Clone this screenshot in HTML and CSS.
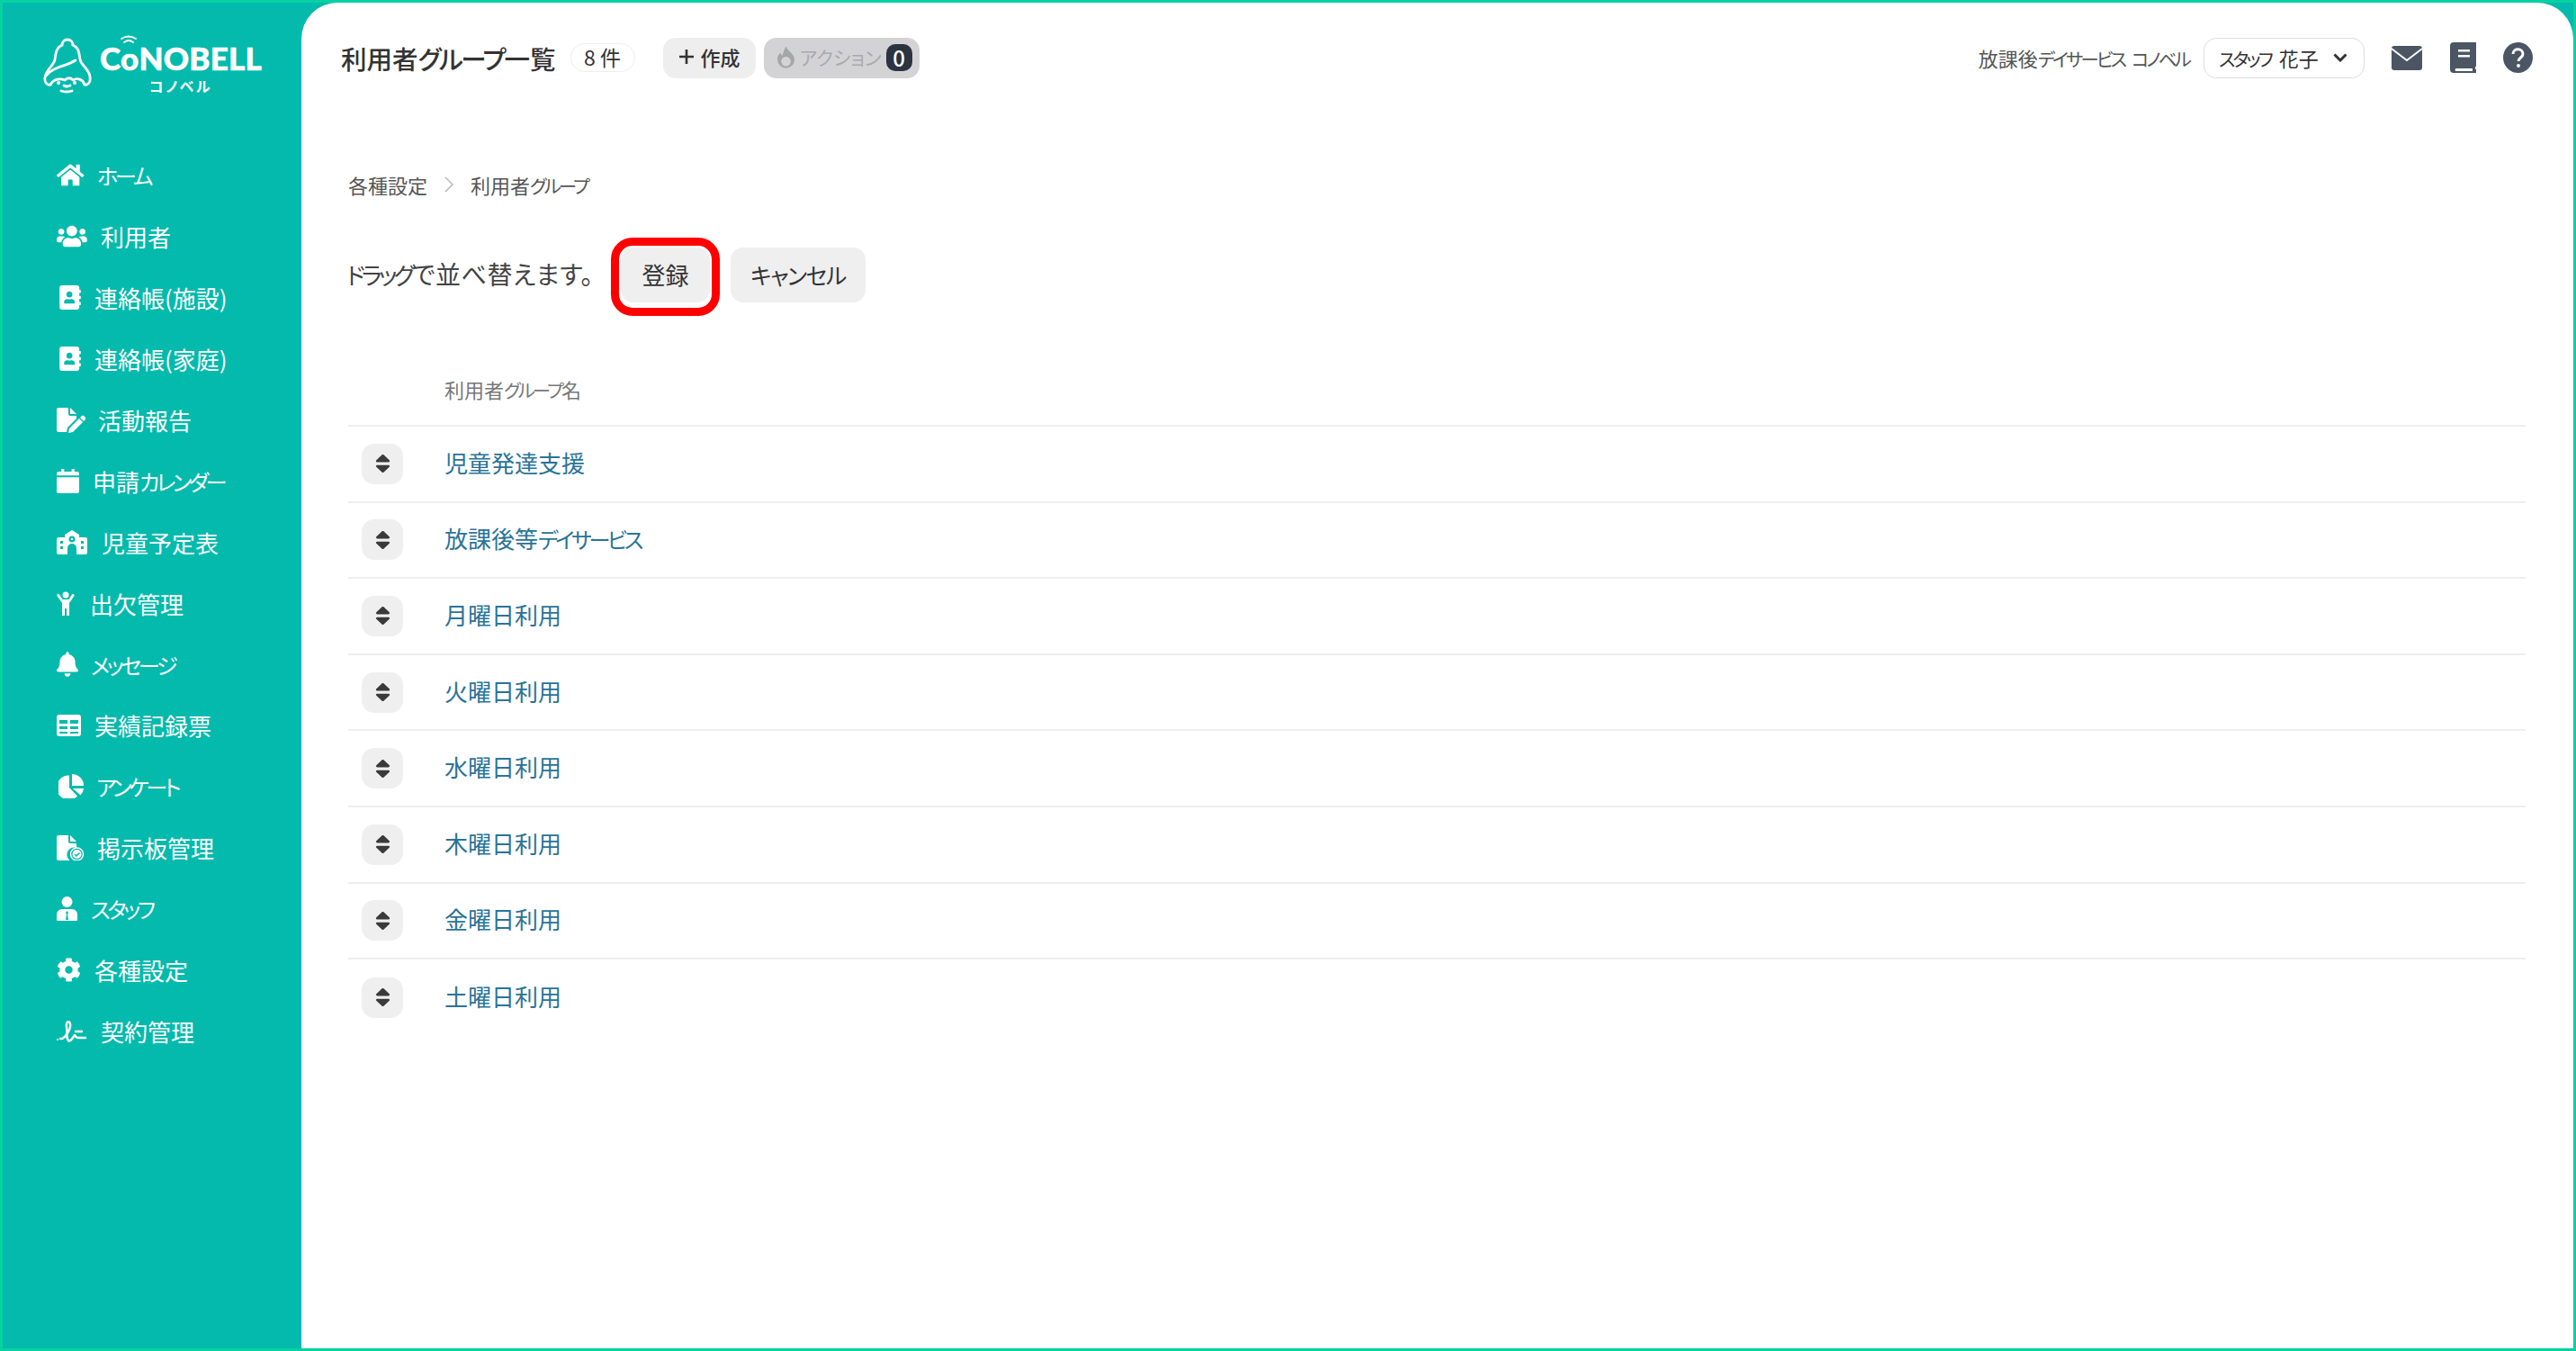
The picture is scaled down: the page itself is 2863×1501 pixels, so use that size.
FILE: index.html
```html
<!DOCTYPE html>
<html lang="ja">
<head>
<meta charset="utf-8">
<title>利用者グループ一覧</title>
<link rel="stylesheet" href="styles.css">
</head>
<body>
<svg class="defs" width="0" height="0" aria-hidden="true">
  <symbol id="sort" viewBox="0 0 320 512" preserveAspectRatio="none"><path d="M41 288h238c21.4 0 32.1 25.9 17 41L177 448c-9.4 9.4-24.6 9.4-33.9 0L24 329c-15.1-15.1-4.4-41 17-41zm255-105L177 64c-9.4-9.4-24.6-9.4-33.9 0L24 183c-15.1 15.1-4.4 41 17 41h238c21.4 0 32.1-25.9 17-41z"/></symbol>
  <symbol id="addr" viewBox="0 0 448 512"><path d="M436 160c6.6 0 12-5.4 12-12v-40c0-6.600-5.400-12-12-12h-20V48c0-26.500-21.500-48-48-48H48C21.500 0 0 21.500 0 48v416c0 26.500 21.500 48 48 48h320c26.500 0 48-21.500 48-48v-48h20c6.600 0 12-5.400 12-12v-40c0-6.600-5.400-12-12-12h-20v-64h20c6.600 0 12-5.400 12-12v-40c0-6.600-5.400-12-12-12h-20v-64h20zm-228-32c35.300 0 64 28.700 64 64s-28.700 64-64 64-64-28.700-64-64 28.700-64 64-64zm112 236.800c0 10.600-10 19.200-22.400 19.200H118.400C106 384 96 375.400 96 364.800v-19.200c0-31.800 30.100-57.600 67.200-57.600h5c12.300 5.100 25.700 8 39.800 8s27.600-2.900 39.800-8h5c37.100 0 67.200 25.800 67.200 57.600v19.200z"/></symbol>
</svg>
<div class="frame">
  <aside class="sidebar">
    <div class="brand">
      <svg class="bell" width="54" height="62" viewBox="0 0 54 62" fill="none" stroke="#fff" stroke-width="2.800" stroke-linecap="round" stroke-linejoin="round">
        <path d="M21 8C14 11 14 18 13 24C12 31 3 35 2 44C1 50 5 53 8 52"/>
        <path d="M33 8C40 11 40 18 41 24C42 31 52 35 52 44C53 50 49 53 46 52"/>
        <path d="M21 8C21 0 33 0 33 8"/>
        <path d="M3 42C13 31 25 32 36 25"/>
        <path d="M8 52C12 45 20 45 24 47C27 44 31 44 33 47C38 44 44 46 46 52"/>
        <path d="M20 59Q26 61 32 59"/>
        <path d="M23 53Q26 55 30 53"/>
        <circle cx="17" cy="50" r="2" fill="#fff" stroke="none"/>
        <circle cx="35" cy="50" r="2" fill="#fff" stroke="none"/>
      </svg>
      <div class="wordmark">
        <div class="word">C<span class="word-o">o<svg class="wifi" width="20" height="9" viewBox="0 0 20 9" fill="none" stroke="#fff" stroke-width="1.800" stroke-linecap="round"><path d="M2 4Q10 -1 18 4"/><path d="M5 8Q10 4 15 8"/></svg></span>NOBELL</div>
        <div class="kana">コノベル</div>
      </div>
    </div>
    <nav class="nav">
      <a class="nav-item"><svg width="31" height="27" viewBox="0 0 576 512" preserveAspectRatio="xMinYMid"><path d="M280.37 148.26L96 300.11V464a16 16 0 0 0 16 16l112.06-.29a16 16 0 0 0 15.92-16V368a16 16 0 0 1 16-16h64a16 16 0 0 1 16 16v95.64a16 16 0 0 0 16 16.05L464 480a16 16 0 0 0 16-16V300L295.67 148.26a12.19 12.19 0 0 0-15.3 0zM571.6 251.47L488 182.56V44.05a12 12 0 0 0-12-12h-56a12 12 0 0 0-12 12v72.61L318.47 43a48 48 0 0 0-61 0L4.34 251.47a12 12 0 0 0-1.6 16.9l25.5 31A12 12 0 0 0 45.15 301l235.22-193.74a12.19 12.19 0 0 1 15.3 0L530.9 301a12 12 0 0 0 16.9-1.6l25.5-31a12 12 0 0 0-1.7-16.93z"/></svg><span class="kn">ホーム</span></a>
      <a class="nav-item"><svg width="35" height="27" viewBox="0 0 640 512" preserveAspectRatio="xMinYMid"><path d="M96 224c35.300 0 64-28.700 64-64s-28.700-64-64-64-64 28.700-64 64 28.700 64 64 64zm448 0c35.300 0 64-28.700 64-64s-28.700-64-64-64-64 28.700-64 64 28.700 64 64 64zm32 32h-64c-17.600 0-33.500 7.100-45.100 18.600 40.300 22.100 68.900 62 75.100 109.400h66c17.700 0 32-14.300 32-32v-32c0-35.300-28.700-64-64-64zm-256 0c61.900 0 112-50.100 112-112S381.900 32 320 32 208 82.100 208 144s50.100 112 112 112zm76.800 32h-8.300c-20.800 10-43.900 16-68.500 16s-47.600-6-68.500-16h-8.300C179.600 288 128 339.600 128 403.200V432c0 26.500 21.500 48 48 48h288c26.500 0 48-21.500 48-48v-28.800c0-63.600-51.600-115.200-115.200-115.200zm-223.700-13.400C161.500 263.100 145.600 256 128 256H64c-35.300 0-64 28.700-64 64v32c0 17.700 14.300 32 32 32h65.900c6.300-47.400 34.900-87.300 75.200-109.400z"/></svg>利用者</a>
      <a class="nav-item"><svg class="addr-ic" width="26" height="27" preserveAspectRatio="xMinYMid"><use href="#addr"/></svg>連絡帳(施設)</a>
      <a class="nav-item"><svg class="addr-ic" width="26" height="27" preserveAspectRatio="xMinYMid"><use href="#addr"/></svg>連絡帳(家庭)</a>
      <a class="nav-item"><svg width="32" height="28" viewBox="0 0 32 28" preserveAspectRatio="xMinYMid"><path d="M2 0h11v7a2 2 0 0 0 2 2h7v3L12 22l-1 5H2a2 2 0 0 1-2-2V2a2 2 0 0 1 2-2z"/><path d="M15 0l7 7h-7z"/><path d="M14 23l11-11 4 4-11 11-5 1z"/><path d="M26 11l2-2a1.500 1.500 0 0 1 2 0l2 2a1.500 1.500 0 0 1 0 2l-2 2z"/></svg>活動報告</a>
      <a class="nav-item"><svg width="26" height="27" viewBox="0 0 24 26" preserveAspectRatio="xMinYMid"><path d="M5 0h3v4H5zM16 0h3v4h-3z"/><path d="M2 3h20a2 2 0 0 1 2 2v2H0V5a2 2 0 0 1 2-2z"/><path d="M0 9h24v15a2 2 0 0 1-2 2H2a2 2 0 0 1-2-2z"/></svg>申請<span class="kn">カレンダー</span></a>
      <a class="nav-item"><svg width="36" height="27" viewBox="0 0 34 27" preserveAspectRatio="xMinYMid"><path fill-rule="evenodd" d="M17 0L25 5V8H32a2 2 0 0 1 2 2V25a2 2 0 0 1-2 2H22V20a5 5 0 0 0-10 0V27H2a2 2 0 0 1-2-2V10a2 2 0 0 1 2-2H9V5ZM17 6.500a3.500 3.500 0 1 0 0 7 3.500 3.500 0 0 0 0-7ZM4 12v3h3v-3ZM4 18v3h3v-3ZM27 12v3h3v-3ZM27 18v3h3v-3Z"/><circle cx="17" cy="10" r="1.300"/></svg>児童予定表</a>
      <a class="nav-item"><svg width="23" height="27" viewBox="0 0 20 27" preserveAspectRatio="xMinYMid"><circle cx="10" cy="4" r="3.500"/><path d="M1 3a1.500 1.500 0 0 1 2 .5L6.500 9h7L17 3.500a1.500 1.500 0 0 1 2.500 1.500L14 13v13a1.500 1.500 0 0 1-3 0v-7H9v7a1.500 1.500 0 0 1-3 0V13L.5 5A1.500 1.500 0 0 1 1 3z"/></svg>出欠管理</a>
      <a class="nav-item"><svg width="24" height="28" viewBox="0 0 448 512" preserveAspectRatio="xMinYMid"><path d="M224 512c35.320 0 63.970-28.650 63.970-64H160.030c0 35.350 28.650 64 63.970 64zm215.390-149.710c-19.320-20.760-55.470-51.990-55.470-154.290 0-77.700-54.480-139.900-127.940-155.160V32c0-17.670-14.320-32-31.980-32s-31.980 14.330-31.980 32v20.840C118.560 68.100 64.080 130.300 64.080 208c0 102.300-36.150 133.530-55.470 154.290-6 6.450-8.660 14.160-8.610 21.710.11 16.400 12.980 32 32.100 32h383.800c19.120 0 32-15.600 32.100-32 .05-7.550-2.610-15.270-8.610-21.710z"/></svg><span class="kn">メッセージ</span></a>
      <a class="nav-item"><svg width="28" height="24" viewBox="0 0 27 24" preserveAspectRatio="xMinYMid"><path fill-rule="evenodd" d="M3 0h21a3 3 0 0 1 3 3v18a3 3 0 0 1-3 3H3a3 3 0 0 1-3-3V3a3 3 0 0 1 3-3zM3 6v4h9V6zm12 0v4h9V6zM3 13v3h9v-3zm12 0v3h9v-3zM3 19v2h9v-2zm12 0v2h9v-2z"/></svg>実績記録票</a>
      <a class="nav-item"><svg class="pie-ic" width="30" height="27" viewBox="0 0 29 27" preserveAspectRatio="xMinYMid"><path d="M12 1.500V15l9 9.500A13.500 13.500 0 1 1 12 1.500z"/><path d="M15 0a13 13 0 0 1 13 13H15z"/><path d="M16 16h12a13 13 0 0 1-3.500 7.500z"/></svg><span class="kn">アンケート</span></a>
      <a class="nav-item"><svg width="31" height="28" viewBox="0 0 30 28" preserveAspectRatio="xMinYMid"><path d="M2 0h11v7a2 2 0 0 0 2 2h7v5a8 8 0 0 0-8 13.500V28H2a2 2 0 0 1-2-2V2a2 2 0 0 1 2-2z"/><path d="M15 0l7 7h-7z"/><circle cx="22.500" cy="21" r="7" fill="none" stroke="#fff" stroke-width="1.500"/><circle cx="22.500" cy="21" r="5"/><path d="M20 21l2 2 3.500-3.500" fill="none" stroke="#03baad" stroke-width="1.500"/></svg>掲示板管理</a>
      <a class="nav-item"><svg width="24" height="27" viewBox="0 0 23 27" preserveAspectRatio="xMinYMid"><circle cx="11.500" cy="6" r="6"/><path fill-rule="evenodd" d="M6 14h11a6 6 0 0 1 6 6v6a1 1 0 0 1-1 1H1a1 1 0 0 1-1-1v-6a6 6 0 0 1 6-6zm5.500 2L10 18l1 2-1 6h3l-1-6 1-2z"/></svg><span class="kn">スタッフ</span></a>
      <a class="nav-item"><svg width="28" height="27" viewBox="0 0 512 512" preserveAspectRatio="xMinYMid"><path d="M487.400 315.700l-42.600-24.600c4.300-23.200 4.300-47 0-70.200l42.600-24.600c4.900-2.800 7.100-8.600 5.500-14-11.100-35.600-30-67.800-54.700-94.600-3.800-4.100-10-5.100-14.800-2.300L380.800 110c-17.900-15.400-38.500-27.300-60.800-35.100V25.800c0-5.600-3.900-10.500-9.400-11.700-36.700-8.200-74.300-7.800-109.200 0-5.500 1.200-9.400 6.100-9.400 11.700V75c-22.200 7.900-42.800 19.800-60.800 35.100L88.700 85.500c-4.900-2.800-11-1.900-14.800 2.300-24.700 26.700-43.600 58.900-54.700 94.600-1.700 5.400.6 11.200 5.500 14L67.300 221c-4.300 23.200-4.300 47 0 70.200l-42.600 24.600c-4.900 2.800-7.100 8.600-5.500 14 11.100 35.600 30 67.800 54.700 94.600 3.800 4.100 10 5.100 14.800 2.300l42.600-24.600c17.900 15.400 38.500 27.300 60.800 35.100v49.200c0 5.600 3.900 10.500 9.400 11.700 36.700 8.200 74.300 7.800 109.200 0 5.500-1.200 9.400-6.100 9.400-11.700v-49.200c22.200-7.900 42.800-19.800 60.800-35.100l42.600 24.600c4.900 2.800 11 1.900 14.800-2.300 24.700-26.700 43.600-58.900 54.700-94.600 1.500-5.500-.7-11.300-5.600-14.100zM256 336c-44.100 0-80-35.900-80-80s35.900-80 80-80 80 35.900 80 80-35.900 80-80 80z"/></svg>各種設定</a>
      <a class="nav-item"><svg width="35" height="26" viewBox="0 0 33 26" fill="none" stroke="#fff" stroke-width="2.500" stroke-linecap="round" stroke-linejoin="round" preserveAspectRatio="xMinYMid"><path d="M4 22C9 23 16 11 15 6C14 1 10 3 11 9C12 15 10 21 13 24C15 26 18 21 20 18C21 20 22 21 24 21H32"/><path d="M21 14H28"/><circle cx="1" cy="23" r="1" fill="#fff" stroke="none"/></svg>契約管理</a>
    </nav>
  </aside>
  <main class="main">
    <header class="topbar">
      <div class="topbar-left">
        <h1 class="title">利用者<span class="kn">グループ</span>一覧</h1>
        <span class="count">8 件</span>
        <button class="pill pill-create"><svg width="18" height="18" viewBox="0 0 18 18" fill="none" stroke="#333" stroke-width="2.600"><path d="M9 1v16M1 9h16"/></svg>作成</button>
        <button class="pill pill-action"><svg width="22" height="26" viewBox="0 0 20 24" fill="#a5a6a8"><path fill-rule="evenodd" d="M10 0c1 5 8 7 9 14a9 9 0 0 1-18 0c0-4 2-6 3-7l2 3c1-3 2-6 4-10zm0 11a5 5 0 1 0 0 10 5 5 0 0 0 0-10z"/></svg><span class="action-label">アクション</span><span class="action-num">0</span></button>
      </div>
      <div class="topbar-right">
        <span class="org">放課後<span class="kn">デイサービス コノベル</span></span>
        <button class="user-select"><span><span class="kn">スタッフ</span> 花子</span><svg width="16" height="10" viewBox="0 0 16 10" fill="none" stroke="#333" stroke-width="3"><path d="M1.500 1.500L8 8l6.500-6.500"/></svg></button>
        <svg class="tool-mail" width="34" height="27" viewBox="0 0 34 27"><path fill="#4b5563" d="M3 0h28a3 3 0 0 1 3 3v21a3 3 0 0 1-3 3H3a3 3 0 0 1-3-3V3a3 3 0 0 1 3-3z"/><path d="M0 3l17 13L34 3" fill="none" stroke="#fff" stroke-width="1.800"/></svg>
        <svg class="tool-book" width="29" height="34" viewBox="0 0 29 34"><path fill="#4b5563" fill-rule="evenodd" d="M4 0h25v27h-1v3h1v4H4a4 4 0 0 1-4-4V4a4 4 0 0 1 4-4zm3 29a1.500 1.500 0 0 0 0 3h18v-3zM9 8v2.500h13V8zm0 6v2.500h13V14z"/></svg>
        <svg class="tool-help" width="33" height="34" viewBox="0 0 33 34"><ellipse cx="16.500" cy="17" rx="16.500" ry="17" fill="#4b5563"/><path d="M11 13c0-7 11-7 11 0 0 4-5 4-5 8" fill="none" stroke="#fff" stroke-width="3"/><circle cx="17" cy="26" r="2" fill="#fff"/></svg>
      </div>
    </header>
    <section class="content">
      <nav class="crumbs"><span>各種設定</span><svg width="12" height="20" viewBox="0 0 12 20" fill="none" stroke="#bbb" stroke-width="1.600"><path d="M2 2l8 8-8 8"/></svg><span>利用者<span class="kn">グループ</span></span></nav>
      <div class="toolbar">
        <p class="hint"><span class="kn">ドラッグ</span>で並べ替えます。</p>
        <button class="btn btn-marked">登録</button>
        <button class="btn btn-cancel"><span class="kn">キャンセル</span></button>
      </div>
      <div class="list">
        <div class="list-head"><span>利用者<span class="kn">グループ</span>名</span></div>
        <div class="row"><span class="handle"><svg width="17" height="26"><use href="#sort"/></svg></span><a class="link">児童発達支援</a></div>
        <div class="row"><span class="handle"><svg width="17" height="26"><use href="#sort"/></svg></span><a class="link">放課後等<span class="kn">デイサービス</span></a></div>
        <div class="row"><span class="handle"><svg width="17" height="26"><use href="#sort"/></svg></span><a class="link">月曜日利用</a></div>
        <div class="row"><span class="handle"><svg width="17" height="26"><use href="#sort"/></svg></span><a class="link">火曜日利用</a></div>
        <div class="row"><span class="handle"><svg width="17" height="26"><use href="#sort"/></svg></span><a class="link">水曜日利用</a></div>
        <div class="row"><span class="handle"><svg width="17" height="26"><use href="#sort"/></svg></span><a class="link">木曜日利用</a></div>
        <div class="row"><span class="handle"><svg width="17" height="26"><use href="#sort"/></svg></span><a class="link">金曜日利用</a></div>
        <div class="row"><span class="handle"><svg width="17" height="26"><use href="#sort"/></svg></span><a class="link">土曜日利用</a></div>
      </div>
    </section>
  </main>
</div>
</body>
</html>
```

FILE: styles.css
```css
* { box-sizing: border-box; }
html, body { margin: 0; padding: 0; }
body {
  font-family: "Noto Sans CJK JP", "Noto Sans", sans-serif;
  font-feature-settings: "palt";
  color: #333;
  background: #fff;
}
.defs { position: absolute; }
button { font: inherit; border: 0; color: inherit; font-feature-settings: inherit; }

/* narrower kana runs */
.kn { font-size: 0.93em; letter-spacing: -0.14em; }

.frame {
  display: flex;
  width: 2863px;
  height: 1501px;
  border: 3px solid #06d2a0;
  background: #03baad;
  overflow: hidden;
}

/* sidebar */
.sidebar { flex: 0 0 332px; color: #fff; }
.brand {
  display: flex;
  align-items: flex-start;
  gap: 9px;
  height: 158px;
  padding: 39px 0 0 45px;
}
.bell { flex: none; }
.wordmark { display: flex; flex-direction: column; align-items: center; width: 180px; padding-top: 4px; }
.word {
  font-family: Lato, sans-serif;
  font-weight: 900;
  font-size: 35px;
  line-height: 36px;
  letter-spacing: 0.2px;
  white-space: nowrap;
  -webkit-text-stroke: 0.6px #fff;
}
.word-o { position: relative; }
.wifi { position: absolute; left: -1px; top: -4px; }
.kana { font-size: 16px; font-weight: 700; line-height: 20px; letter-spacing: 2.500px; margin-top: 3px; }
.nav { display: flex; flex-direction: column; }
.nav-item {
  display: flex;
  align-items: center;
  height: 67.900px;
  padding-left: 60px;
  font-size: 26px;
  color: #fff;
  white-space: nowrap;
}
.nav-item svg { flex: none; fill: #fff; margin-right: 14px; }
.nav-item svg[stroke] { fill: none; }
.addr-ic { margin-left: 2px; }
.pie-ic { margin-left: 2px; margin-right: 12px !important; }

/* main */
.main { flex: 1; min-width: 0; background: #fff; border-radius: 40px 40px 0 0; }
.topbar {
  display: flex;
  align-items: center;
  justify-content: space-between;
  height: 122px;
  padding: 0 45px 0 44px;
}
.topbar-left, .topbar-right { display: flex; align-items: center; }
.title { margin: 0; font-size: 28.500px; font-weight: 500; color: #333; }
.title .kn { font-size: 1em; letter-spacing: -0.08em; }
.count {
  display: flex;
  align-items: center;
  justify-content: center;
  width: 72px;
  height: 32px;
  margin-left: 16px;
  padding-bottom: 2px;
  border: 1px solid #eee;
  border-radius: 16px;
  font-size: 23px;
}
.pill {
  display: flex;
  align-items: center;
  height: 45px;
  border-radius: 14px;
  font-size: 22px;
  font-weight: 500;
}
.pill-create { width: 103px; margin-left: 31px; padding: 0 0 2px 17px; gap: 7px; background: #eee; }
.pill-action { width: 173px; margin-left: 9px; padding: 0 0 0 14px; gap: 5px; background: #d3d3d6; color: #aaaaad; font-weight: 400; }
.action-label { font-size: 21px; white-space: nowrap; padding-bottom: 2px; }
.action-num {
  display: flex;
  align-items: center;
  justify-content: center;
  width: 30px;
  height: 30px;
  margin-left: auto;
  margin-right: 8px;
  padding-bottom: 2px;
  border-radius: 10px;
  background: #2b3440;
  color: #fff;
  font-size: 24px;
  font-weight: 500;
}
.org { font-size: 22px; color: #555; white-space: nowrap; }
.org .kn { word-spacing: 6px; }
.user-select {
  display: flex;
  align-items: center;
  justify-content: space-between;
  width: 179px;
  height: 45px;
  margin-left: 16px;
  padding: 0 18px 0 16px;
  border: 1.500px solid #ddd;
  border-radius: 14px;
  background: #fff;
  font-size: 22px;
  word-spacing: 4px;
  white-space: nowrap;
}
.tool-mail { margin-left: 30px; }
.tool-book { margin-left: 31px; }
.tool-help { margin-left: 30px; }

.content { padding: 60px 53px 0 52px; }
.crumbs {
  display: flex;
  align-items: center;
  gap: 18px;
  height: 40px;
  font-size: 22px;
  color: #555;
}
.toolbar { display: flex; align-items: center; margin-top: 50px; margin-left: -2px; }
.hint { margin: 0; width: 305px; padding-bottom: 4px; font-size: 28px; letter-spacing: 0.5px; color: #444; white-space: nowrap; }
.btn {
  height: 61px;
  padding-bottom: 3px;
  border-radius: 14px;
  background: #efefef;
  font-size: 26px;
  font-weight: 400;
  color: #333;
  white-space: nowrap;
}
.btn .kn { font-size: 0.96em; letter-spacing: -0.06em; }
.btn-marked { position: relative; width: 99px; }
.btn-marked::after {
  content: "";
  position: absolute;
  inset: -11px -11px -15px -11px;
  border: 9px solid #f00;
  border-radius: 24px;
}
.btn-cancel { width: 150px; margin-left: 23px; }

.list-head {
  display: flex;
  align-items: center;
  height: 61px;
  margin-top: 77px;
  padding: 0 0 21px 107px;
  border-bottom: 2px solid #eee;
  font-size: 22px;
  line-height: 40px;
  color: #777;
}
.row {
  display: flex;
  align-items: center;
  height: 84.600px;
  padding-left: 15px;
  border-bottom: 2px solid #eee;
}
.row:last-child { border-bottom: 0; }
.handle {
  display: flex;
  align-items: center;
  justify-content: center;
  width: 46px;
  height: 45px;
  margin-right: 46px;
  border-radius: 14px;
  background: #efefef;
  fill: #3a3a3a;
}
.link { padding-bottom: 4px; font-size: 26px; color: #2a7398; white-space: nowrap; }
```
